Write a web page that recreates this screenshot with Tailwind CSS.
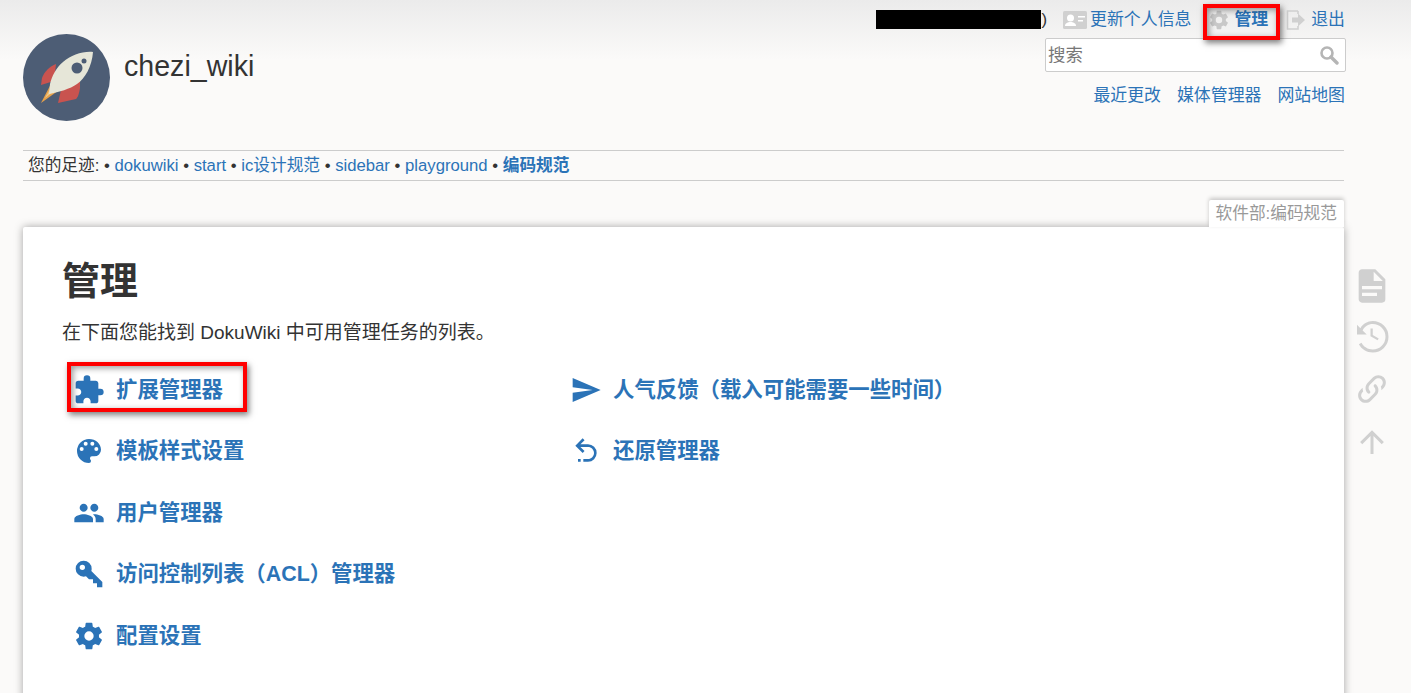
<!DOCTYPE html>
<html lang="zh">
<head>
  <meta charset="UTF-8" />
  <title>管理 [chezi_wiki]</title>
  <script src="https://cdn.jsdelivr.net/npm/@tailwindcss/browser@4"></script>
</head>
<body class="h-[693px] overflow-hidden bg-[#fbfaf9] bg-gradient-to-b from-[#ebebeb] to-[#fbfaf9] bg-[length:100%_60px] bg-no-repeat text-[16.7px] leading-[22px] text-[#333] [font-family:'Liberation_Sans','Noto_Sans_CJK_SC',sans-serif]">
  <div class="pl-[23px]">
    <!-- header -->
    <header class="flex h-[150px] w-[1323px] justify-between">
      <div class="flex items-start pt-[34px]">
        <svg class="h-[87px] w-[87px]" viewBox="0 0 87 87">
          <circle cx="43.5" cy="43.5" r="43.5" fill="#4d5d75"/>
          <path d="M33 30C27 32 21 38 19 44L18 51L31 47Z" fill="#c9534f"/>
          <path d="M57 46V54C56 60 55 63 53 65L35 69L38 56Z" fill="#c9534f"/>
          <path d="M18 69L30 46L39 54Z" fill="#e8a24a"/>
          <path d="M22 64L30 50L35 54Z" fill="#efc98a"/>
          <path d="M70 18C60 17 48 21 40 28C33 34 29 42 27 50L26 60C36 58 47 55 54 50C62 45 69 32 70 18Z" fill="#e6e6d8"/>
          <circle cx="54" cy="34" r="5.5" fill="#4d5d75"/>
          <circle cx="61" cy="27" r="2.5" fill="#4d5d75"/>
        </svg>
        <div class="ml-[14px] mt-[14px] text-[28.6px] leading-[36px]">chezi_wiki</div>
      </div>
      <div class="flex flex-col items-end">
        <div class="flex h-[38px] items-center pr-[1px] pt-[1px] text-[16.9px] text-[#2b73b7]">
          <span class="h-[19px] w-[165px] bg-black"></span>
          <span class="text-[#333]">)</span>
          <svg class="ml-[16px] h-[20px] w-[24px]" viewBox="0 0 24 20">
            <rect y="1" width="24" height="18" rx="1.5" fill="#d0d0d0"/>
            <circle cx="7.5" cy="8" r="3.5" fill="#fff"/>
            <path d="M2 16c0-3 3-4 5.5-4s5.5 1 5.5 4z" fill="#fff"/>
            <path d="M15 6h7v1.5h-7zM15 10h5v1.5h-5z" fill="#fff"/>
          </svg>
          <a class="ml-[3px]">更新个人信息</a>
          <span class="relative ml-[17px] flex items-center font-bold">
            <span class="absolute -bottom-[9px] -left-[5px] -right-[12px] -top-[5px] border-4 border-[#f00] shadow-[2px_3px_6px_rgba(0,0,0,0.5),inset_2px_2px_6px_rgba(0,0,0,0.4)]"></span>
            <svg class="h-[22px] w-[22px]" viewBox="0 0 24 24"><path fill="#c8c8c8" d="M12,15.5A3.5,3.5 0 0,1 8.5,12A3.5,3.5 0 0,1 12,8.5A3.5,3.5 0 0,1 15.5,12A3.5,3.5 0 0,1 12,15.5M19.43,12.97C19.47,12.65 19.5,12.33 19.5,12C19.5,11.67 19.47,11.34 19.43,11L21.54,9.37C21.73,9.22 21.78,8.95 21.66,8.73L19.66,5.27C19.54,5.05 19.27,4.96 19.05,5.05L16.56,6.05C16.04,5.66 15.5,5.32 14.87,5.07L14.5,2.42C14.46,2.18 14.25,2 14,2H10C9.75,2 9.54,2.18 9.5,2.42L9.13,5.07C8.5,5.32 7.96,5.66 7.44,6.05L4.95,5.05C4.73,4.96 4.46,5.05 4.34,5.27L2.34,8.73C2.21,8.95 2.27,9.22 2.46,9.37L4.57,11C4.53,11.34 4.5,11.67 4.5,12C4.5,12.33 4.53,12.65 4.57,12.97L2.46,14.63C2.27,14.78 2.21,15.05 2.34,15.27L4.34,18.73C4.46,18.95 4.73,19.03 4.95,18.95L7.44,17.94C7.96,18.34 8.5,18.68 9.13,18.93L9.5,21.58C9.54,21.82 9.75,22 10,22H14C14.25,22 14.46,21.82 14.5,21.58L14.87,18.93C15.5,18.67 16.04,18.34 16.56,17.94L19.05,18.95C19.27,19.03 19.54,18.95 19.66,18.73L21.66,15.27C21.78,15.05 21.73,14.78 21.54,14.63L19.43,12.97Z"/></svg>
            <a class="ml-[4px]">管理</a>
          </span>
          <svg class="ml-[18px] h-[20px] w-[20px]" viewBox="0 0 20 20">
            <path d="M12 1H1.5v18H12v-3M12 4V1" fill="none" stroke="#d0d0d0" stroke-width="1.6"/>
            <path d="M6 7.5h6V3.5l7 6.5-7 6.5v-4H6z" fill="#d0d0d0"/>
          </svg>
          <a class="ml-[5px]">退出</a>
        </div>
        <div class="flex h-[34px] w-[301px] items-center justify-between rounded-[2px] border border-[#ccc] bg-white pl-[2px] pr-[6px] text-[17.4px] text-[#777]">
          <span>搜索</span>
          <svg class="h-[20px] w-[20px]" viewBox="0 0 20 20">
            <circle cx="8" cy="8" r="5.5" fill="none" stroke="#b5b5b5" stroke-width="2.6"/>
            <path d="M12 12l6 6" stroke="#b5b5b5" stroke-width="3.4" stroke-linecap="round"/>
          </svg>
        </div>
        <nav class="mt-[13px] flex gap-[16px] pr-[1px] text-[16.9px] text-[#2b73b7]">
          <a>最近更改</a>
          <a>媒体管理器</a>
          <a>网站地图</a>
        </nav>
      </div>
    </header>

    <!-- breadcrumbs -->
    <div class="flex h-[31px] w-[1321px] items-center border-y border-[#ccc] pl-[5px]">
      <span>您的足迹:&nbsp;•&nbsp;</span><a class="text-[#2b73b7]">dokuwiki</a><span>&nbsp;•&nbsp;</span><a class="text-[#2b73b7]">start</a><span>&nbsp;•&nbsp;</span><a class="text-[#2b73b7]">ic设计规范</a><span>&nbsp;•&nbsp;</span><a class="text-[#2b73b7]">sidebar</a><span>&nbsp;•&nbsp;</span><a class="text-[#2b73b7]">playground</a><span>&nbsp;•&nbsp;</span><a class="font-bold text-[#2b73b7]">编码规范</a>
    </div>

    <div class="mt-[19px] flex">
      <!-- page -->
      <div class="w-[1321px]">
        <div class="flex justify-end">
          <div class="relative z-10 flex h-[27px] items-center rounded-t-[2px] bg-white px-[7px] pt-[1px] text-[#999] shadow-[0_-2px_4px_rgba(0,0,0,0.2)]">软件部:编码规范</div>
        </div>
        <main class="h-[480px] rounded-[2px] bg-white pl-[39px] pt-[26px] shadow-[0_0_8px_rgba(0,0,0,0.35)]">
          <h1 class="text-[38px] font-bold leading-[56px]">管理</h1>
          <p class="mt-[11px] text-[19px] leading-[26px]">在下面您能找到 DokuWiki 中可用管理任务的列表。</p>
          <div class="mt-[13px] flex text-[21.4px] font-bold text-[#2b73b7]">
            <ul class="flex w-[497px] flex-col">
              <li class="flex h-[61.5px] items-center pl-[11px]">
                <span class="relative flex items-center">
                  <span class="absolute -bottom-[6px] -left-[6px] -right-[24px] -top-[12px] border-4 border-[#f00] shadow-[2px_3px_6px_rgba(0,0,0,0.5),inset_2px_2px_6px_rgba(0,0,0,0.4)]"></span>
                  <svg class="h-[32px] w-[32px] fill-current" viewBox="0 0 24 24"><path d="M20.5,11H19V7C19,5.89 18.1,5 17,5H13V3.5A2.5,2.5 0 0,0 10.5,1A2.5,2.5 0 0,0 8,3.5V5H4A2,2 0 0,0 2,7V10.8H3.5C5,10.8 6.2,12 6.2,13.5C6.2,15 5,16.2 3.5,16.2H2V20A2,2 0 0,0 4,22H7.8V20.5C7.8,19 9,17.8 10.5,17.8C12,17.8 13.2,19 13.2,20.5V22H17A2,2 0 0,0 19,20V16H20.5A2.5,2.5 0 0,0 23,13.5A2.5,2.5 0 0,0 20.5,11Z"/></svg>
                  <a class="ml-[11px]">扩展管理器</a>
                </span>
              </li>
              <li class="flex h-[61.5px] items-center pl-[11px]">
                <svg class="h-[32px] w-[32px] fill-current" viewBox="0 0 24 24"><path d="M17.5,12A1.5,1.5 0 0,1 16,10.5A1.5,1.5 0 0,1 17.5,9A1.5,1.5 0 0,1 19,10.5A1.5,1.5 0 0,1 17.5,12M14.5,8A1.5,1.5 0 0,1 13,6.5A1.5,1.5 0 0,1 14.5,5A1.5,1.5 0 0,1 16,6.5A1.5,1.5 0 0,1 14.5,8M9.5,8A1.5,1.5 0 0,1 8,6.5A1.5,1.5 0 0,1 9.5,5A1.5,1.5 0 0,1 11,6.5A1.5,1.5 0 0,1 9.5,8M6.5,12A1.5,1.5 0 0,1 5,10.5A1.5,1.5 0 0,1 6.5,9A1.5,1.5 0 0,1 8,10.5A1.5,1.5 0 0,1 6.5,12M12,3A9,9 0 0,0 3,12A9,9 0 0,0 12,21A1.5,1.5 0 0,0 13.5,19.5C13.5,19.11 13.35,18.76 13.11,18.5C12.88,18.23 12.73,17.88 12.73,17.5A1.5,1.5 0 0,1 14.23,16H16A5,5 0 0,0 21,11C21,6.58 16.97,3 12,3Z"/></svg>
                <a class="ml-[11px]">模板样式设置</a>
              </li>
              <li class="flex h-[61.5px] items-center pl-[11px]">
                <svg class="h-[32px] w-[32px] fill-current" viewBox="0 0 24 24"><path d="M16 11c1.66 0 2.99-1.34 2.99-3S17.66 5 16 5c-1.66 0-3 1.34-3 3s1.34 3 3 3zm-8 0c1.66 0 2.99-1.34 2.99-3S9.66 5 8 5C6.34 5 5 6.34 5 8s1.34 3 3 3zm0 2c-2.33 0-7 1.17-7 3.5V19h14v-2.5c0-2.33-4.67-3.5-7-3.5zm8 0c-.29 0-.62.02-.97.05 1.16.84 1.97 1.97 1.97 3.45V19h6v-2.5c0-2.33-4.67-3.5-7-3.5z"/></svg>
                <a class="ml-[11px]">用户管理器</a>
              </li>
              <li class="flex h-[61.5px] items-center pl-[11px]">
                <svg class="h-[32px] w-[32px] fill-current" viewBox="0 0 24 24"><path d="M22,18V22H18V19H15V16H12L9.74,13.74C9.19,13.91 8.61,14 8,14A6,6 0 0,1 2,8A6,6 0 0,1 8,2A6,6 0 0,1 14,8C14,8.61 13.91,9.19 13.74,9.74L22,18M7,5A2,2 0 0,0 5,7A2,2 0 0,0 7,9A2,2 0 0,0 9,7A2,2 0 0,0 7,5Z"/></svg>
                <a class="ml-[11px]">访问控制列表（ACL）管理器</a>
              </li>
              <li class="flex h-[61.5px] items-center pl-[11px]">
                <svg class="h-[32px] w-[32px] fill-current" viewBox="0 0 24 24"><path d="M12,15.5A3.5,3.5 0 0,1 8.5,12A3.5,3.5 0 0,1 12,8.5A3.5,3.5 0 0,1 15.5,12A3.5,3.5 0 0,1 12,15.5M19.43,12.97C19.47,12.65 19.5,12.33 19.5,12C19.5,11.67 19.47,11.34 19.43,11L21.54,9.37C21.73,9.22 21.78,8.95 21.66,8.73L19.66,5.27C19.54,5.05 19.27,4.96 19.05,5.05L16.56,6.05C16.04,5.66 15.5,5.32 14.87,5.07L14.5,2.42C14.46,2.18 14.25,2 14,2H10C9.75,2 9.54,2.18 9.5,2.42L9.13,5.07C8.5,5.32 7.96,5.66 7.44,6.05L4.95,5.05C4.73,4.96 4.46,5.05 4.34,5.27L2.34,8.73C2.21,8.95 2.27,9.22 2.46,9.37L4.57,11C4.53,11.34 4.5,11.67 4.5,12C4.5,12.33 4.53,12.65 4.57,12.97L2.46,14.63C2.27,14.78 2.21,15.05 2.34,15.27L4.34,18.73C4.46,18.95 4.73,19.03 4.95,18.95L7.44,17.94C7.96,18.34 8.5,18.68 9.13,18.93L9.5,21.58C9.54,21.82 9.75,22 10,22H14C14.25,22 14.46,21.82 14.5,21.58L14.87,18.93C15.5,18.67 16.04,18.34 16.56,17.94L19.05,18.95C19.27,19.03 19.54,18.95 19.66,18.73L21.66,15.27C21.78,15.05 21.73,14.78 21.54,14.63L19.43,12.97Z"/></svg>
                <a class="ml-[11px]">配置设置</a>
              </li>
            </ul>
            <ul class="flex flex-col">
              <li class="flex h-[61.5px] items-center pl-[11px]">
                <svg class="h-[32px] w-[32px] fill-current" viewBox="0 0 24 24"><path d="M2,21L23,12L2,3V10L17,12L2,14V21Z"/></svg>
                <a class="ml-[11px]">人气反馈（载入可能需要一些时间）</a>
              </li>
              <li class="flex h-[61.5px] items-center pl-[11px]">
                <svg class="h-[32px] w-[32px] fill-current" viewBox="0 0 24 24"><path d="M13.5,7A6.5,6.5 0 0,1 20,13.5A6.5,6.5 0 0,1 13.5,20H10V18H13.5C16,18 18,16 18,13.5C18,11 16,9 13.5,9H7.83L10.91,12.09L9.5,13.5L4,8L9.5,2.5L10.92,3.91L7.83,7H13.5M6,18H8V20H6V18Z"/></svg>
                <a class="ml-[11px]">还原管理器</a>
              </li>
            </ul>
          </div>
        </main>
      </div>

      <!-- page tools -->
      <aside class="ml-[8px] flex w-[40px] flex-col items-center pt-[66px] text-[#d0d0d0]">
        <svg class="h-[40px] w-[40px] fill-current" viewBox="0 0 24 24"><path d="M13,9H18.5L13,3.5V9M6,2H14L20,8V20A2,2 0 0,1 18,22H6C4.89,22 4,21.1 4,20V4C4,2.89 4.89,2 6,2M15,18V16H6V18H15M18,14V12H6V14H18Z"/></svg>
        <svg class="mt-[12px] h-[36px] w-[36px] fill-current" viewBox="0 0 24 24"><path d="M11,7V12.11L15.71,14.9L16.5,13.62L12.5,11.25V7M12.5,2C8.97,2 5.91,3.92 4.27,6.77L2,4.5V11H8.5L5.75,8.25C6.96,5.73 9.5,4 12.5,4A8.5,8.5 0 0,1 21,12.5A8.5,8.5 0 0,1 12.5,21C9.23,21 6.41,19.16 5,16.5L3.25,17.5C5.03,20.8 8.5,23 12.5,23A10.5,10.5 0 0,0 23,12.5A10.5,10.5 0 0,0 12.5,2Z"/></svg>
        <svg class="mt-[17px] h-[36px] w-[36px] fill-current" viewBox="0 0 24 24"><path d="M10.59,13.41C11,13.8 11,14.44 10.59,14.83C10.2,15.22 9.56,15.22 9.17,14.83C7.22,12.88 7.22,9.71 9.17,7.76V7.76L12.71,4.22C14.66,2.27 17.83,2.27 19.78,4.22C21.73,6.17 21.73,9.34 19.78,11.29L18.29,12.78C18.3,11.96 18.17,11.14 17.89,10.36L18.36,9.88C19.54,8.71 19.54,6.81 18.36,5.64C17.19,4.46 15.29,4.46 14.12,5.64L10.59,9.17C9.41,10.34 9.41,12.24 10.59,13.41M13.41,9.17C13.8,8.78 14.44,8.78 14.83,9.17C16.78,11.12 16.78,14.29 14.83,16.24V16.24L11.29,19.78C9.34,21.73 6.17,21.73 4.22,19.78C2.27,17.83 2.27,14.66 4.22,12.71L5.71,11.22C5.7,12.04 5.83,12.86 6.11,13.65L5.64,14.12C4.46,15.29 4.46,17.19 5.64,18.36C6.81,19.54 8.71,19.54 9.88,18.36L13.41,14.83C14.59,13.66 14.59,11.76 13.41,10.59C13,10.2 13,9.56 13.41,9.17Z"/></svg>
        <svg class="mt-[17px] h-[36px] w-[36px] fill-current" viewBox="0 0 24 24"><path d="M13,20H11V8L5.5,13.5L4.08,12.08L12,4.16L19.92,12.08L18.5,13.5L13,8V20Z"/></svg>
      </aside>
    </div>
  </div>
</body>
</html>
